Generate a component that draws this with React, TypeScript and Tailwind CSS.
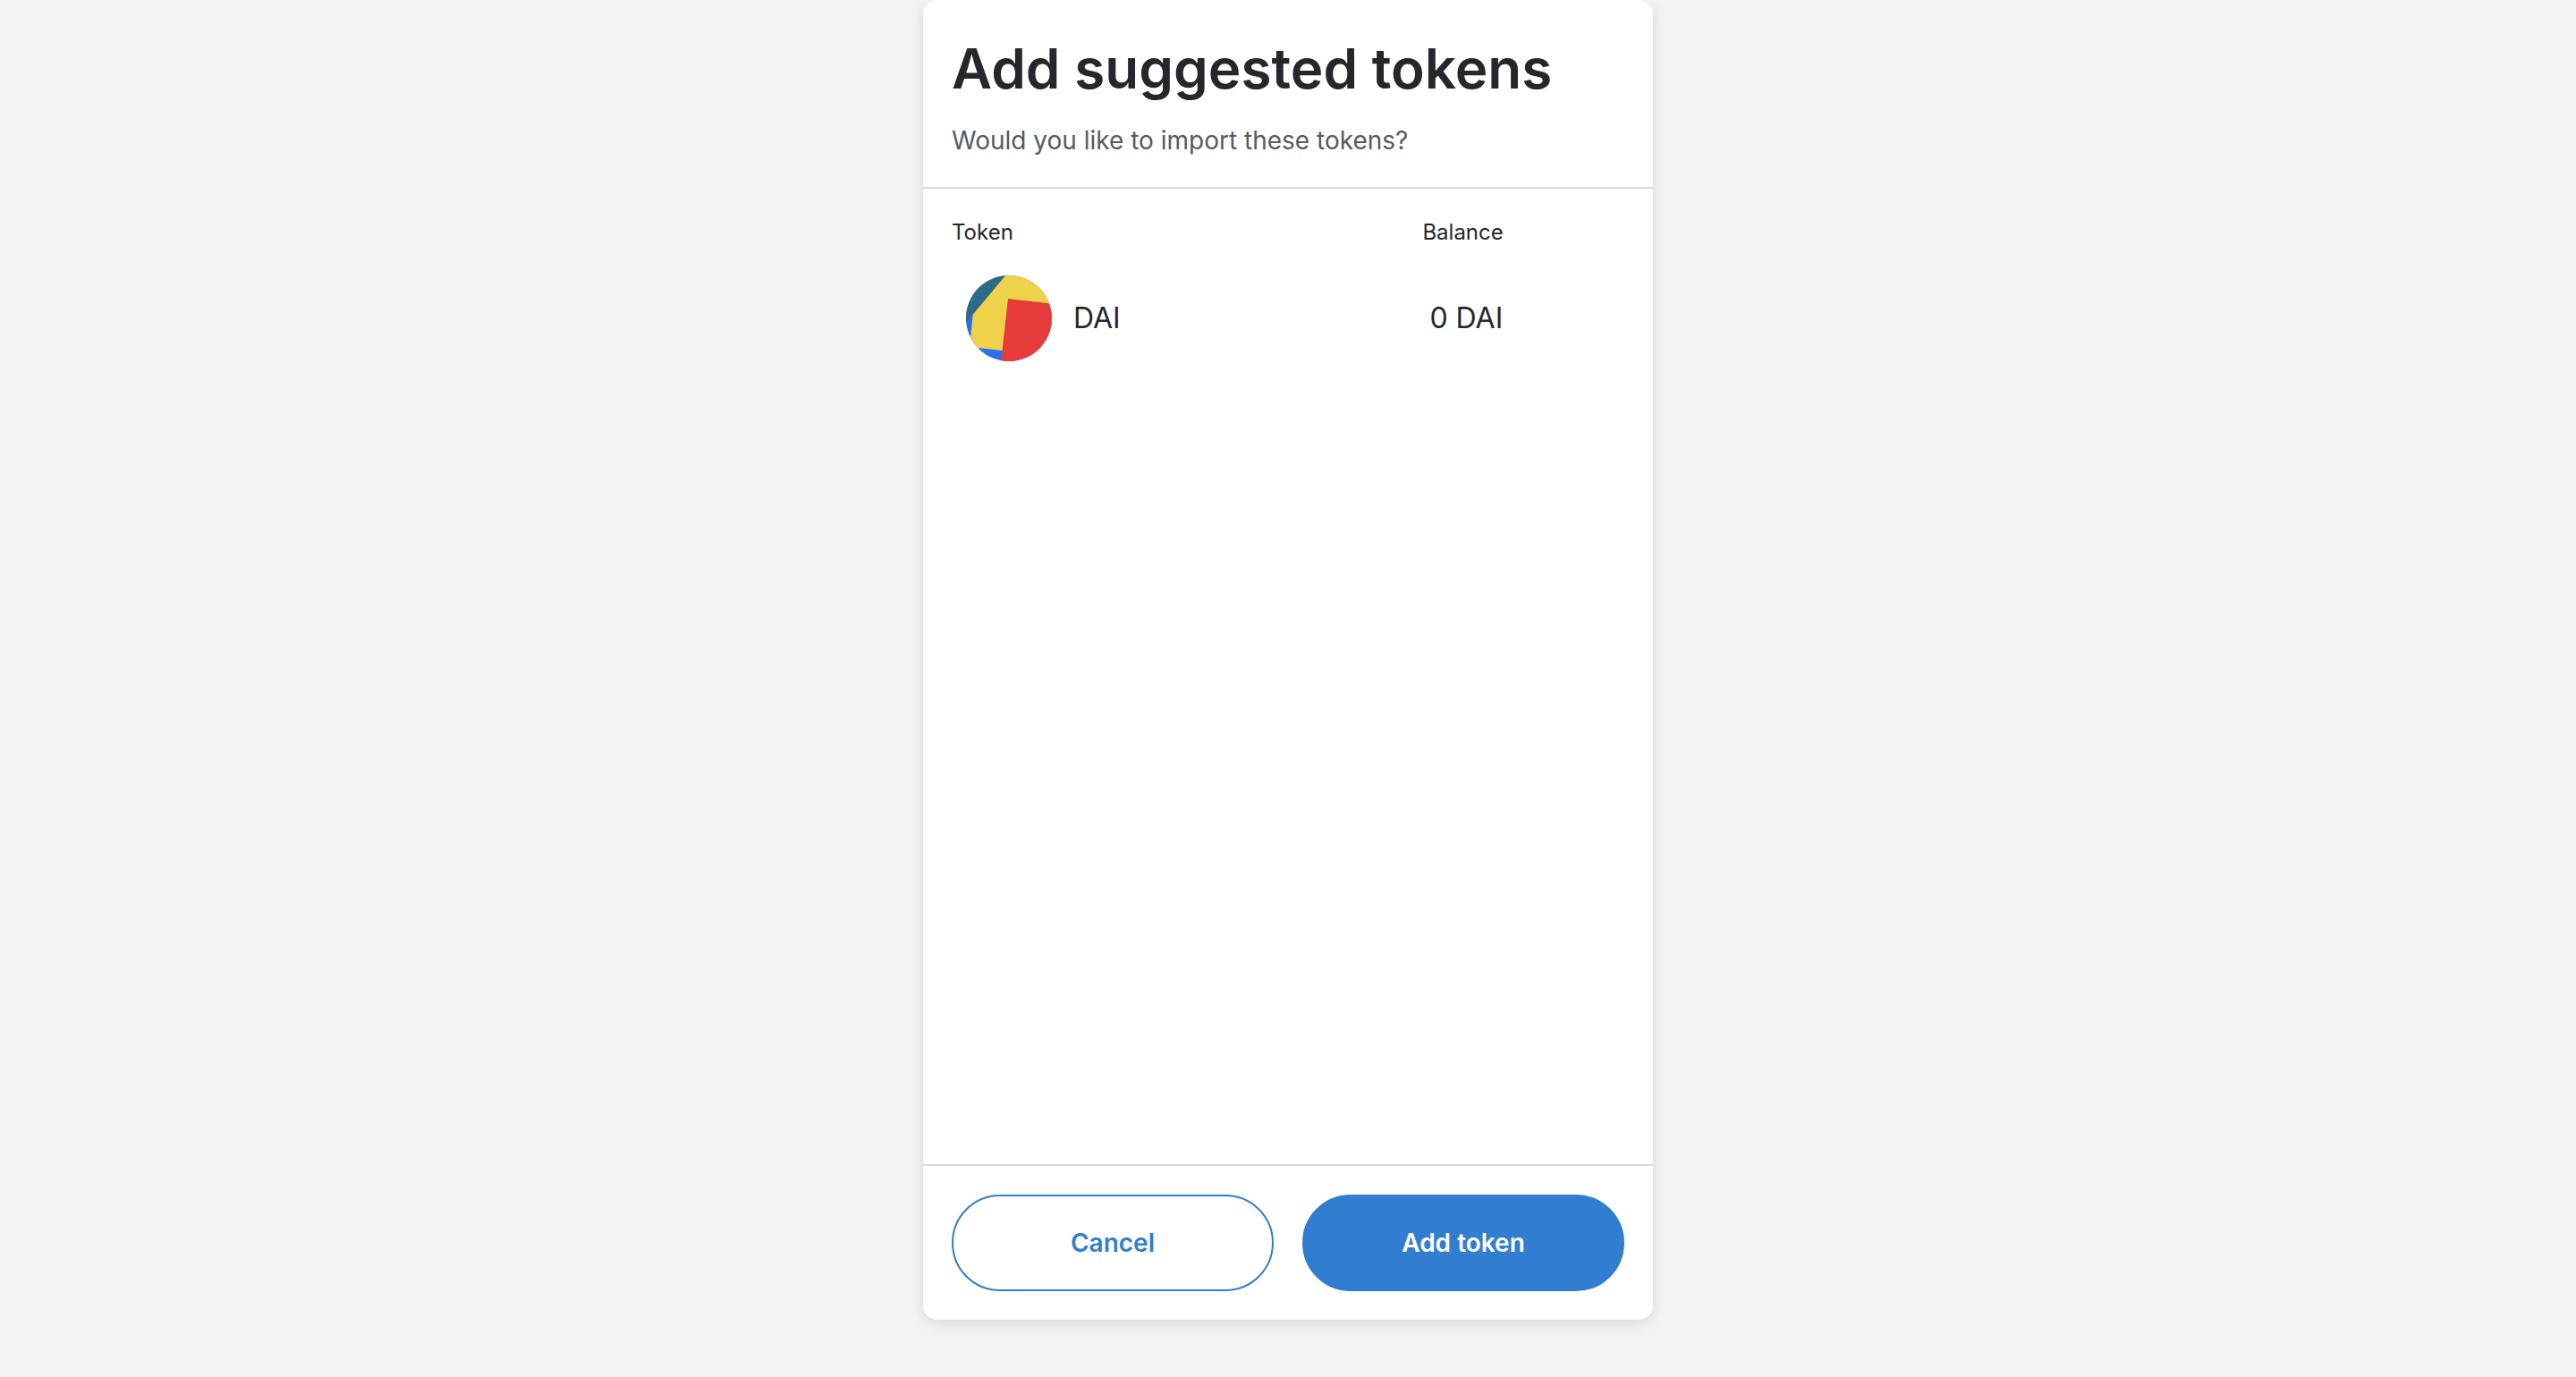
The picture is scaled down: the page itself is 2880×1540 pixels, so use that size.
import React from 'react';

interface Token {
  symbol: string;
  balance: string;
}

const suggestedTokens: Token[] = [{ symbol: 'DAI', balance: '0' }];

function TokenIcon() {
  return (
    <svg viewBox="0 0 96 96" className="w-24 h-24 shrink-0" aria-hidden="true">
      <defs>
        <clipPath id="token-icon-clip">
          <circle cx="48" cy="48" r="48" />
        </clipPath>
      </defs>
      <g clipPath="url(#token-icon-clip)">
        <rect width="96" height="96" fill="#2b6eea" />
        <path d="M12 0H96V90.3L4.1 80Z" fill="#eed24a" />
        <path d="M0 0H44.2L0 53Z" fill="#2c6a89" />
        <path d="M47 26L96 31.7V96H39.2Z" fill="#e73a3a" />
      </g>
    </svg>
  );
}

export default function App() {
  return (
    <div className="min-h-screen flex flex-col items-center bg-[#f2f4f6] pb-16 font-['Inter',sans-serif] text-[#25272b]">
      <main className="flex-1 w-full max-w-[816px] flex flex-col bg-white rounded-2xl shadow-[0_4px_16px_rgba(0,0,0,0.12)]">
        {/* Header */}
        <header className="p-8 border-b-2 border-[#d8d8dd]">
          <h1 className="text-[62px] leading-[89px] font-semibold">Add suggested tokens</h1>
          <p className="mt-4 text-[28px] leading-10 text-[#545b62]">
            Would you like to import these tokens?
          </p>
        </header>

        {/* Token list */}
        <section className="flex-1 p-8">
          <table className="w-full table-fixed text-left">
            <thead>
              <tr className="text-2xl leading-[33px]">
                <th scope="col" className="w-[70%] p-0 font-normal">Token</th>
                <th scope="col" className="p-0 font-normal">Balance</th>
              </tr>
            </thead>
            <tbody>
              {suggestedTokens.map((token) => (
                <tr key={token.symbol} className="text-[32px] leading-10">
                  <td className="pl-4 py-8">
                    <div className="flex items-center gap-6">
                      <TokenIcon />
                      <span>{token.symbol}</span>
                    </div>
                  </td>
                  <td className="pl-2 py-8">
                    {token.balance} {token.symbol}
                  </td>
                </tr>
              ))}
            </tbody>
          </table>
        </section>

        {/* Actions */}
        <footer className="grid grid-cols-2 gap-8 p-8 border-t-2 border-[#d8d8dd] text-[28px] font-semibold">
          <button
            type="button"
            className="h-[108px] rounded-full border-2 border-[#317dcf] text-[#317dcf] cursor-pointer"
          >
            Cancel
          </button>
          <button
            type="button"
            className="h-[108px] rounded-full border-2 border-[#317dcf] bg-[#317dcf] text-white cursor-pointer"
          >
            Add token
          </button>
        </footer>
      </main>
    </div>
  );
}
